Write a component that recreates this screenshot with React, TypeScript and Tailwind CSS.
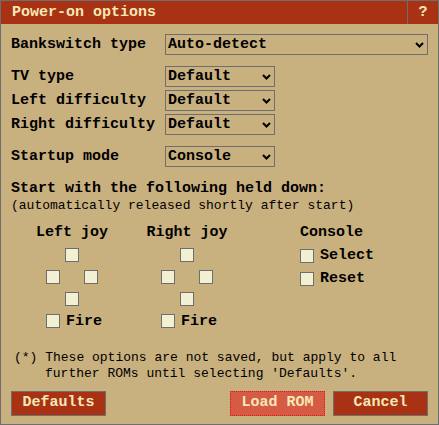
import { ReactNode } from "react";

const mono = "font-['Liberation_Mono','DejaVu_Sans_Mono',monospace]";

const Chevron = () => (
  <svg width="9" height="6" viewBox="0 0 9 6" className="shrink-0">
    <polyline points="1,1 4.5,4.5 8,1" fill="none" stroke="#000" strokeWidth="2" />
  </svg>
);

const Select = ({ value, width }: { value: string; width: string }) => (
  <div
    className={`flex h-[21px] items-center justify-between border border-[#6e6e6e] pl-[2px] pr-[3px] ${width}`}
  >
    <span className="text-[15px] font-bold leading-none">{value}</span>
    <Chevron />
  </div>
);

const Row = ({ label, children, className = "" }: { label: string; children: ReactNode; className?: string }) => (
  <div className={`flex items-center ${className}`}>
    <span className="w-[154px] text-[15px] font-bold leading-none">{label}</span>
    {children}
  </div>
);

const Box = ({ className = "" }: { className?: string }) => (
  <div className={`h-[14px] w-[14px] shrink-0 border border-[#6e6e6e] bg-[#f2f0d2] ${className}`} />
);

const Joystick = ({ title }: { title: string }) => (
  <div className="flex w-[86px] flex-col items-center">
    <span className="h-[16px] text-[15px] font-bold leading-[16px]">{title}</span>
    <div className="mt-[7px] grid grid-cols-[14px_14px_14px] grid-rows-[14px_14px_14px_14px] gap-x-[5px] gap-y-[8px]">
      <Box className="col-start-2 row-start-1" />
      <Box className="col-start-1 row-start-2" />
      <Box className="col-start-3 row-start-2" />
      <Box className="col-start-2 row-start-3" />
      <div className="col-span-3 row-start-4 flex items-center gap-[6px]">
        <Box />
        <span className="text-[15px] font-bold leading-none">Fire</span>
      </div>
    </div>
  </div>
);

const Button = ({ label, focused = false }: { label: string; focused?: boolean }) => (
  <div
    className={`flex h-[25px] w-[95px] items-center justify-center text-[15px] font-bold text-[#f3e9b5] ${
      focused
        ? "border border-dotted border-[#e01818] bg-[#d65b45]"
        : "border border-[#6e6e6e] bg-[#a93214]"
    }`}
  >
    {label}
  </div>
);

export default function App() {
  return (
    <div
      className={`${mono} flex h-[425px] w-[439px] flex-col border border-[#6e6e6e] bg-[#c9b07f] text-black`}
    >
      <div className="flex h-[23px] shrink-0 bg-[#a93214] text-[#f3e9b5]">
        <span className="flex-1 pl-[11px] text-[15px] font-bold leading-[23px]">Power-on options</span>
        <span className="w-[31px] border-l border-[#6e6e6e] text-center text-[15px] font-bold leading-[23px]">?</span>
      </div>

      <div className="flex flex-1 flex-col px-[10px]">
        <Row label="Bankswitch type" className="mt-[10px]">
          <Select value="Auto-detect" width="w-[263px]" />
        </Row>

        <div className="mt-[11px] flex flex-col gap-[3px]">
          <Row label="TV type">
            <Select value="Default" width="w-[110px]" />
          </Row>
          <Row label="Left difficulty">
            <Select value="Default" width="w-[110px]" />
          </Row>
          <Row label="Right difficulty">
            <Select value="Default" width="w-[110px]" />
          </Row>
        </div>

        <Row label="Startup mode" className="mt-[11px]">
          <Select value="Console" width="w-[110px]" />
        </Row>

        <span className="mt-[14px] h-[16px] text-[15px] font-bold leading-[16px]">
          Start with the following held down:
        </span>
        <span className="mt-[1px] h-[16px] text-[13px] leading-[16px]">
          (automatically released shortly after start)
        </span>

        <div className="mt-[11px] flex pl-[18px]">
          <Joystick title="Left joy" />
          <div className="w-[29px]" />
          <Joystick title="Right joy" />
          <div className="ml-[70px] flex flex-col">
            <span className="h-[16px] text-[15px] font-bold leading-[16px]">Console</span>
            <div className="mt-[7px] flex flex-col gap-[8px]">
              <div className="flex items-center gap-[6px]">
                <Box />
                <span className="text-[15px] font-bold leading-none">Select</span>
              </div>
              <div className="flex items-center gap-[6px]">
                <Box />
                <span className="text-[15px] font-bold leading-none">Reset</span>
              </div>
            </div>
          </div>
        </div>

        <div className="mt-[22px] flex flex-col pl-[3px] text-[13px] leading-[16px]">
          <span>(*) These options are not saved, but apply to all</span>
          <span className="pl-[31px]">further ROMs until selecting 'Defaults'.</span>
        </div>

        <div className="mt-[9px] flex items-center">
          <Button label="Defaults" />
          <div className="flex-1" />
          <Button label="Load ROM" focused />
          <div className="w-[8px]" />
          <Button label="Cancel" />
        </div>
      </div>
    </div>
  );
}
